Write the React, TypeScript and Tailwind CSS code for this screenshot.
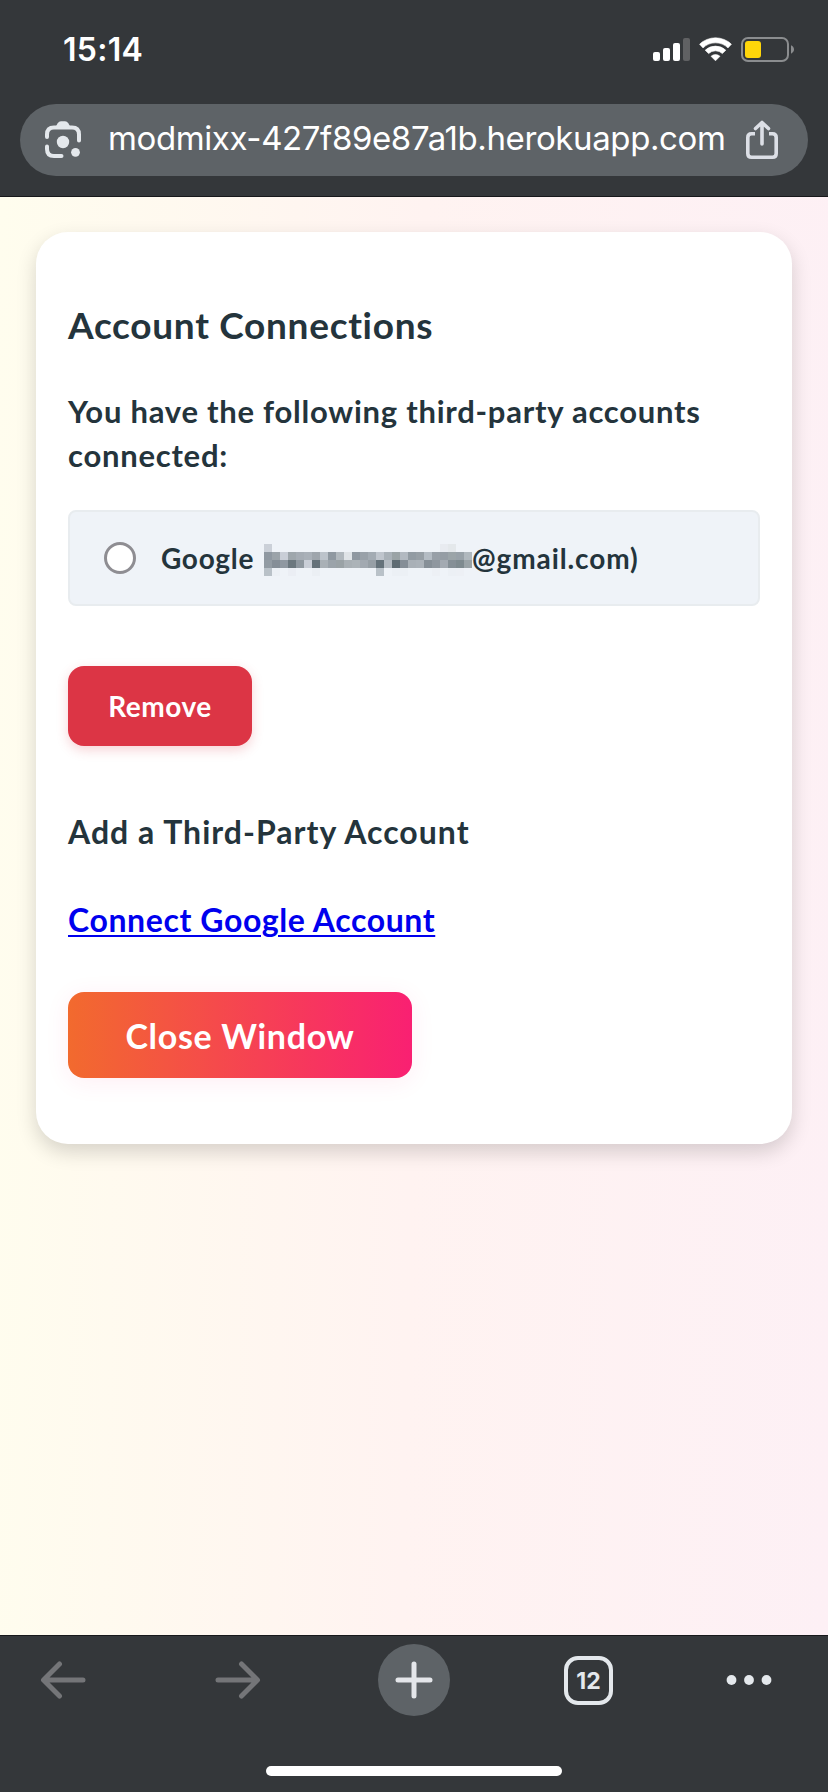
const MOSAIC: string[][] = [
  "cbd0d8 - - - - - - - - - - - - - - - - - - - - - e8ebf0 e4e8eb - -",
  "8f98a1 9ba3a9 c9ced7 9ea6ac a5acb4 a9b0b8 9ea5ac bcc3cb 8f98a1 b1b8be dfe3e7 8f98a1 99a1a9 a3abb3 bfc5cd a9b1b8 9aa3a6 b2b9c1 929ba3 979fa6 b4bcc4 98a0a8 959da4 9ba4a8 98a1a8 b0b8be",
  "929ba3 858e97 8f98a1 6b777e 8f98a0 c9ced7 65727a a9b0b6 9ba3aa 9aa2a6 a9b0b5 acb3b8 a2a9b1 979fa6 65727a b4bbc2 5f6c73 858e97 a9b0b7 abb2b9 868f97 8f979f a3aab2 858f96 7e8a8f 9aa3a7",
  "b9c1c8 ecf0f5 - ebeef4 - - ebeff4 - - - - - - - b9c1c8 - ecf0f5 ecf0f5 - - - edf0f5 - ecf0f5 edf0f5 -",
].map((row) => row.split(" "));

function StatusIcons() {
  return (
    <svg width="144" height="30" viewBox="651 35 144 30" fill="#fff">
      <rect x="653" y="52" width="7" height="9" rx="2" />
      <rect x="663" y="48" width="7" height="13" rx="2" />
      <rect x="673" y="43" width="7" height="18" rx="2" />
      <rect x="683" y="38" width="7" height="23" rx="2" fill="#606163" />
      <path d="M699.6 44.2 A23 23 0 0 1 731.4 44.2 L728 47.9 A18 18 0 0 0 703 47.9 Z" strokeLinejoin="round" stroke="#fff" strokeWidth=".6" />
      <path d="M705.2 50.2 A15 15 0 0 1 725.8 50.2 L722.4 53.6 A10 10 0 0 0 708.6 53.6 Z" strokeLinejoin="round" stroke="#fff" strokeWidth=".6" />
      <path d="M711 56.3 A6.6 6.6 0 0 1 720 56.3 L715.5 60.8 Z" strokeLinejoin="round" stroke="#fff" strokeWidth=".6" />
      <rect x="742" y="38" width="46" height="23" rx="6" fill="none" stroke="#8b8d8f" strokeWidth="2" />
      <rect x="745" y="41" width="16" height="17" rx="3" fill="#ffd60a" />
      <path d="M791 45.3 C795 47 795 52 791 53.7 Z" fill="#8b8d8f" />
    </svg>
  );
}

function LensIcon() {
  return (
    <svg width="38" height="40" viewBox="44 120 38 40" fill="none" stroke="#e4e8ec" strokeWidth="4" strokeLinecap="round">
      <path d="M47 137 V134.500 Q47 127.500 54 127.500 H72 Q79 127.500 79 134.500 V140.500" />
      <path d="M47 146.500 V149 Q47 156 54 156 H61.500" />
      <path d="M55 128 L57.500 123.500 Q59 121.200 61 121.200 H65 Q67 121.200 68.500 123.500 L71 128 Z" fill="#e4e8ec" stroke="none" />
      <circle cx="63" cy="142" r="6.200" fill="#e4e8ec" stroke="none" />
      <circle cx="75.500" cy="152.300" r="4.400" fill="#e4e8ec" stroke="none" />
    </svg>
  );
}

function ShareIcon() {
  return (
    <svg width="34" height="40" viewBox="745 121 34 40" fill="none" stroke="#dcdfe6" strokeWidth="3.600" strokeLinecap="round" strokeLinejoin="round">
      <path d="M755 134.700 H751.500 Q747.800 134.700 747.800 138.400 V154.500 Q747.800 158.200 751.500 158.200 H772.500 Q776.200 158.200 776.200 154.500 V138.400 Q776.200 134.700 772.500 134.700 H769" strokeLinecap="butt" />
      <path d="M762 145 V124.500 M755.500 129.500 L762 123.500 L768.500 129.500" />
    </svg>
  );
}

function ArrowIcon({ forward = false }: { forward?: boolean }) {
  return (
    <svg width="46" height="38" viewBox="0 0 46 38" className={forward ? "ml-[129px] -scale-x-100" : ""} fill="none" stroke="#747578" strokeWidth="5" strokeLinecap="round" strokeLinejoin="round">
      <path d="M43 19 H4 M19.500 3 L3.500 19 L19.500 35" />
    </svg>
  );
}

export default function App() {
  return (
    <div className="flex h-[1792px] w-[828px] flex-col overflow-hidden bg-[#34373a] font-['Lato',sans-serif] font-bold text-[#24343c]">
      <header className="flex h-[197px] shrink-0 flex-col border-b border-[#17181b] px-5 font-['Inter',sans-serif] text-white">
        <div className="flex h-[104px] items-start justify-between pr-[13px] pl-[43px]">
          <span className="mt-[30px] text-[32px] leading-[40px] font-semibold tracking-[0.3px]">15:14</span>
          <span className="mt-[35px]"><StatusIcons /></span>
        </div>
        <div className="flex h-[72px] items-center rounded-full bg-[#5e6367] pr-[29px] pl-6">
          <LensIcon />
          <span className="mb-[5px] ml-[26px] flex-1 text-[33px] leading-[40px] font-normal tracking-[-0.39px] whitespace-nowrap">modmixx-427f89e87a1b.herokuapp.com</span>
          <ShareIcon />
        </div>
      </header>

      <main className="h-[1438px] shrink-0 bg-[linear-gradient(91deg,#fffdee_0%,#fff3f1_50%,#fdf0f5_100%)] px-9 pt-[35px]">
        <section className="flex h-[912px] flex-col items-start rounded-[32px] bg-white px-8 shadow-[0_8px_20px_rgba(0,0,0,0.16)]">
          <h1 className="mt-[69px] text-[37px] leading-[48px] tracking-[0.7px] whitespace-nowrap">Account Connections</h1>
          <p className="mt-[40px] text-[31px] leading-[44px] tracking-[0.75px] whitespace-nowrap">
            You have the following third-party accounts<br />connected:
          </p>
          <label className="mt-[33px] flex h-24 w-full items-center rounded-lg border-2 border-[#e8ecef] bg-[#eff3f8] pl-[34px] text-[28px] whitespace-nowrap">
            <span className="size-8 rounded-full border-3 border-[#8e8d92] bg-white" />
            <span className="ml-[25px] w-[103px] tracking-[0.7px]">Google</span>
            <span className="mt-[4px] grid grid-cols-[repeat(26,8px)]">
              {MOSAIC.flat().map((color, i) => (
                <span key={i} className="h-2 w-2" style={{ background: color === "-" ? "transparent" : "#" + color }} />
              ))}
            </span>
            <span className="tracking-[0.9px]">@gmail.com)</span>
          </label>
          <button className="mt-[60px] h-20 w-[184px] rounded-2xl bg-[#dc3545] text-[28px] tracking-[0.5px] text-white shadow-[0_4px_12px_rgba(220,53,69,0.22)]">Remove</button>
          <h2 className="mt-[64px] text-[32px] leading-[44px] tracking-[1.02px] whitespace-nowrap">Add a Third-Party Account</h2>
          <a className="mt-[44px] text-[32px] leading-[44px] tracking-[0.6px] whitespace-nowrap text-[#0000ee] underline decoration-2 underline-offset-[3px]">Connect Google Account</a>
          <button className="mt-[50px] h-[86px] w-[344px] rounded-2xl bg-[linear-gradient(90deg,#f26a2e,#f92072)] text-[34px] tracking-[0.7px] text-white shadow-[0_4px_24px_rgba(249,32,114,0.08)]">Close Window</button>
        </section>
      </main>

      <footer className="h-[157px] shrink-0 border-t border-[#17181b]">
        <div className="flex h-[88px] items-center pl-10">
          <ArrowIcon />
          <ArrowIcon forward />
          <span className="ml-[117px] flex size-[72px] items-center justify-center rounded-full bg-[#5e6367]">
            <svg width="38" height="38" viewBox="0 0 38 38" stroke="#e4e6ea" strokeWidth="5" strokeLinecap="round"><path d="M19 3V35M3 19H35" /></svg>
          </span>
          <span className="ml-[114px] flex size-[49px] items-center justify-center rounded-[14px] border-[4px] border-[#e4e8ec] pt-[2px] font-['Inter',sans-serif] text-[23px] font-bold text-[#e4e8ec]">12</span>
          <svg className="ml-[113px]" width="46" height="12" viewBox="0 0 46 12" fill="#e4e8ec"><circle cx="5.500" cy="6" r="4.900" /><circle cx="23" cy="6" r="4.900" /><circle cx="40.500" cy="6" r="4.900" /></svg>
        </div>
        <div className="mx-auto mt-[42px] h-[10px] w-[296px] rounded-full bg-white" />
      </footer>
    </div>
  );
}
